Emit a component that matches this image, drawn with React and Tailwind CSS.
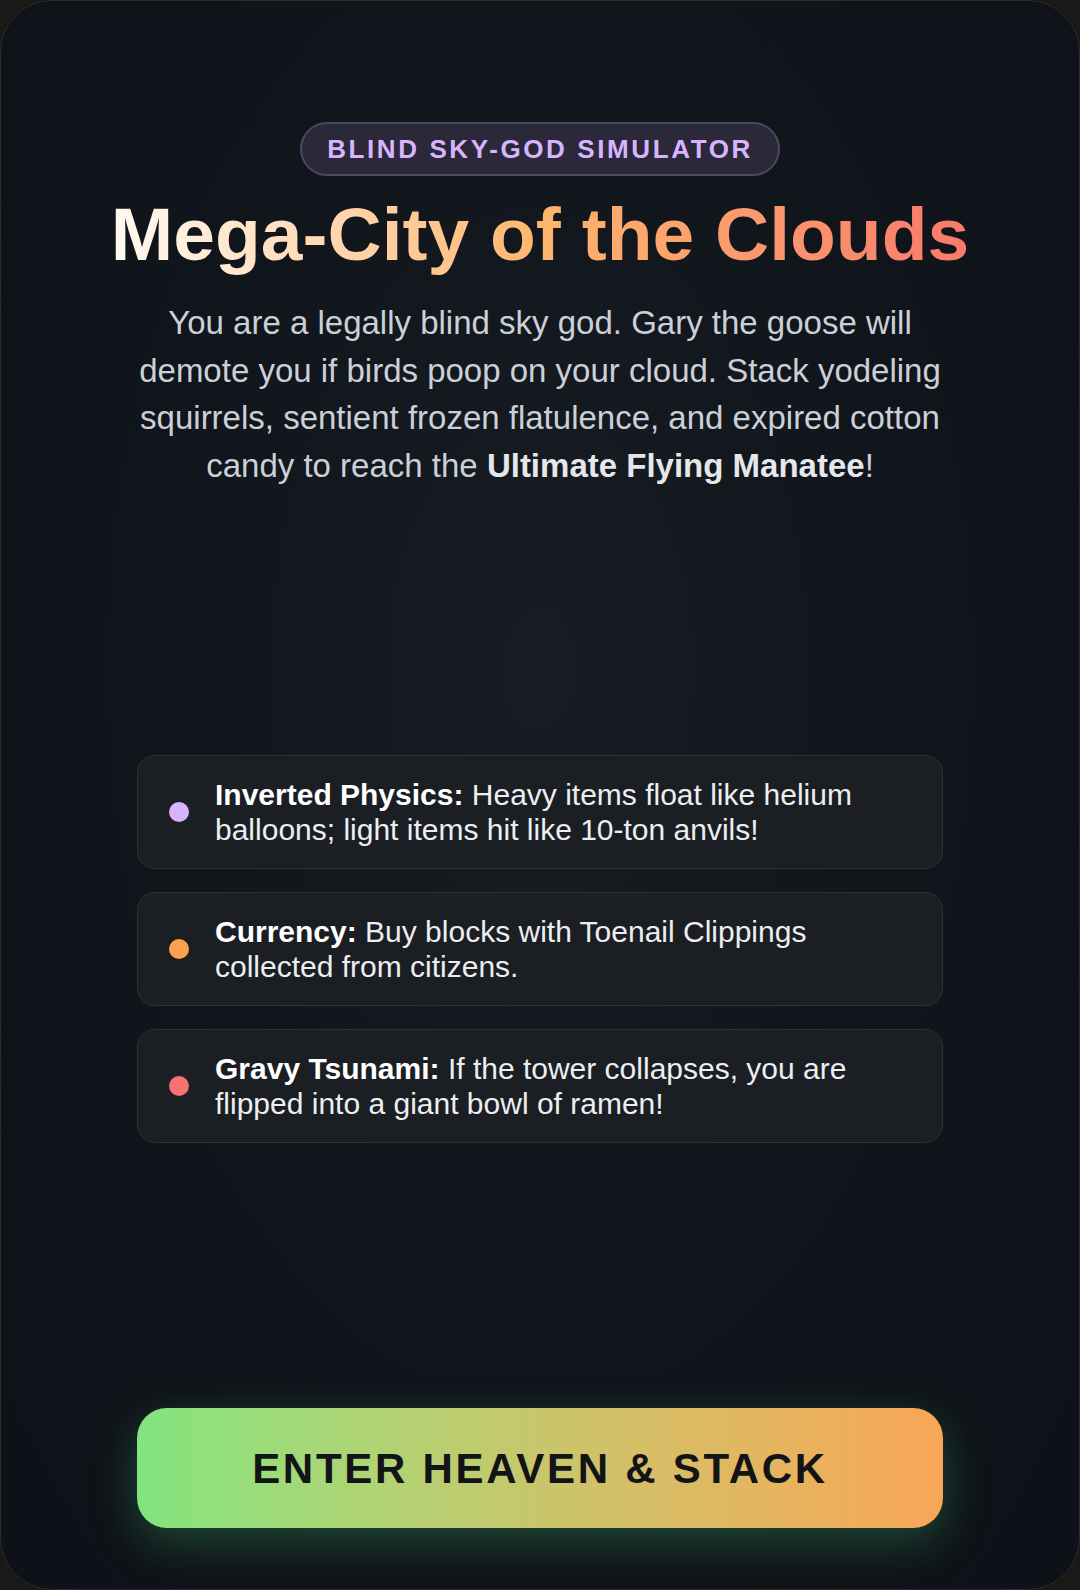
import React from "react";

const rules = [
	{
		dot: "bg-[#d8b4fe]",
		title: "Inverted Physics:",
		text: "Heavy items float like helium balloons; light items hit like 10-ton anvils!",
	},
	{
		dot: "bg-[#fda04f]",
		title: "Currency:",
		text: "Buy blocks with Toenail Clippings collected from citizens.",
	},
	{
		dot: "bg-[#f87171]",
		title: "Gravy Tsunami:",
		text: "If the tower collapses, you are flipped into a giant bowl of ramen!",
	},
];

const App = () => {
	return (
		<div className="w-[1080px] h-[1590px] bg-[#1a1917] font-['Liberation_Sans',Arial,sans-serif]">
			<div className="w-full h-full rounded-[52px] border border-[#2a2b2d] bg-[#0f1319] bg-[radial-gradient(ellipse_at_50%_42%,#181c23_0%,#11151c_45%,#0e1218_100%)] flex flex-col items-center pt-[121px] pb-[61px] overflow-hidden">
				{/* Header */}
				<div className="h-[54px] px-[25px] flex items-center rounded-full border-2 border-[#4d4862] bg-[#2b2839]">
					<span className="text-[26px] font-bold uppercase tracking-[0.1em] text-[#d8b4fe] leading-none">
						Blind Sky-God Simulator
					</span>
				</div>

				<h1 className="mt-[16px] text-[75px] leading-[84px] font-bold bg-gradient-to-r from-[#fffaf2] via-[#fdb56c] to-[#f87a6c] bg-clip-text text-transparent">
					Mega-City of the Clouds
				</h1>

				<p className="mt-[23px] w-[810px] text-center text-[33px] leading-[47.5px] text-[#cbd0d8]">
					You are a legally blind sky god. Gary the goose will demote you if birds poop on your cloud. Stack yodeling squirrels, sentient frozen flatulence, and expired cotton candy to reach the{" "}
					<strong className="font-bold text-[#e5e7eb]">Ultimate Flying Manatee</strong>!
				</p>

				<div className="flex-1" />

				{/* Rules */}
				<div className="w-[806px] flex flex-col gap-[23px]">
					{rules.map((r) => (
						<div
							key={r.title}
							className="flex items-center gap-[26px] pl-[31px] pr-[24px] py-[21px] rounded-[18px] border border-[#2d3138] bg-[#1b1e23]"
						>
							<span className={`w-[20px] h-[20px] rounded-full shrink-0 ${r.dot}`} />
							<p className="text-[30px] leading-[35px] text-[#eceef1]">
								<strong className="font-bold text-white">{r.title}</strong> {r.text}
							</p>
						</div>
					))}
				</div>

				<div className="flex-1" />

				{/* Start button */}
				<button className="w-[806px] h-[120px] rounded-[30px] bg-gradient-to-r from-[#80e57f] via-[#c8c66c] to-[#f8a656] shadow-[0_14px_44px_rgba(74,222,128,0.26)] flex items-center justify-center">
					<span className="text-[42px] font-bold uppercase tracking-[0.065em] text-[#121417]">
						Enter Heaven &amp; Stack
					</span>
				</button>
			</div>
		</div>
	);
};

export default App;
